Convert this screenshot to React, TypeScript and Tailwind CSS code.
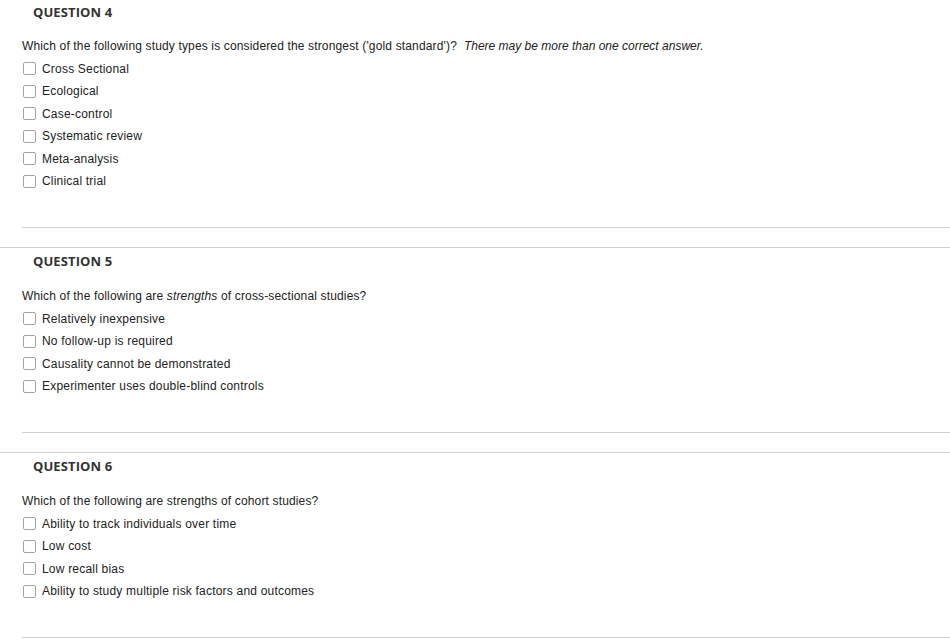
import React from "react";

type Q = { n: number; text: React.ReactNode; options: string[] };

const questions: Q[] = [
  {
    n: 4,
    text: (
      <>
        Which of the following study types is considered the strongest ('gold standard')?{"\u00a0\u00a0"}
        <em className="tracking-normal">There may be more than one correct answer.</em>
      </>
    ),
    options: ["Cross Sectional", "Ecological", "Case-control", "Systematic review", "Meta-analysis", "Clinical trial"],
  },
  {
    n: 5,
    text: (
      <>
        Which of the following are <em>strengths</em> of cross-sectional studies?
      </>
    ),
    options: [
      "Relatively inexpensive",
      "No follow-up is required",
      "Causality cannot be demonstrated",
      "Experimenter uses double-blind controls",
    ],
  },
  {
    n: 6,
    text: <>Which of the following are strengths of cohort studies?</>,
    options: [
      "Ability to track individuals over time",
      "Low cost",
      "Low recall bias",
      "Ability to study multiple risk factors and outcomes",
    ],
  },
];

function Section({ q, first }: { q: Q; first: boolean }) {
  return (
    <div className={first ? "" : "border-t border-[#d0d0d0]"}>
      <div className={`pl-[33px] ${first ? "pt-[3px] h-[35px]" : "pt-[4px] h-[37.5px]"}`}>
        <h3 className="text-[13px] leading-[18px] font-bold text-[#333] font-['Open_Sans',sans-serif] tracking-[0.1px]">
          QUESTION {q.n}
        </h3>
      </div>
      <div className="pl-[22px] font-['Liberation_Sans',Arial,sans-serif] text-[12px] text-[#222]">
        <p className="leading-[22.5px] tracking-[0.15px]">{q.text}</p>
        <ul className="flex flex-col">
          {q.options.map((o) => (
            <li key={o} className="flex items-center h-[22.5px]">
              <span className="w-[13px] h-[13px] border border-[#a3a3a3] rounded-[2px] bg-white ml-[1px] mr-[6px] shrink-0" />
              <span className="leading-[14px] tracking-[0.2px]">{o}</span>
            </li>
          ))}
        </ul>
        <div className="h-[34px]" />
        <div className="border-t border-[#d0d0d0] h-[20px]" />
      </div>
    </div>
  );
}

export default function App() {
  return (
    <div className="w-[950px] h-[640px] bg-white overflow-hidden">
      {questions.map((q, i) => (
        <Section key={q.n} q={q} first={i === 0} />
      ))}
    </div>
  );
}
